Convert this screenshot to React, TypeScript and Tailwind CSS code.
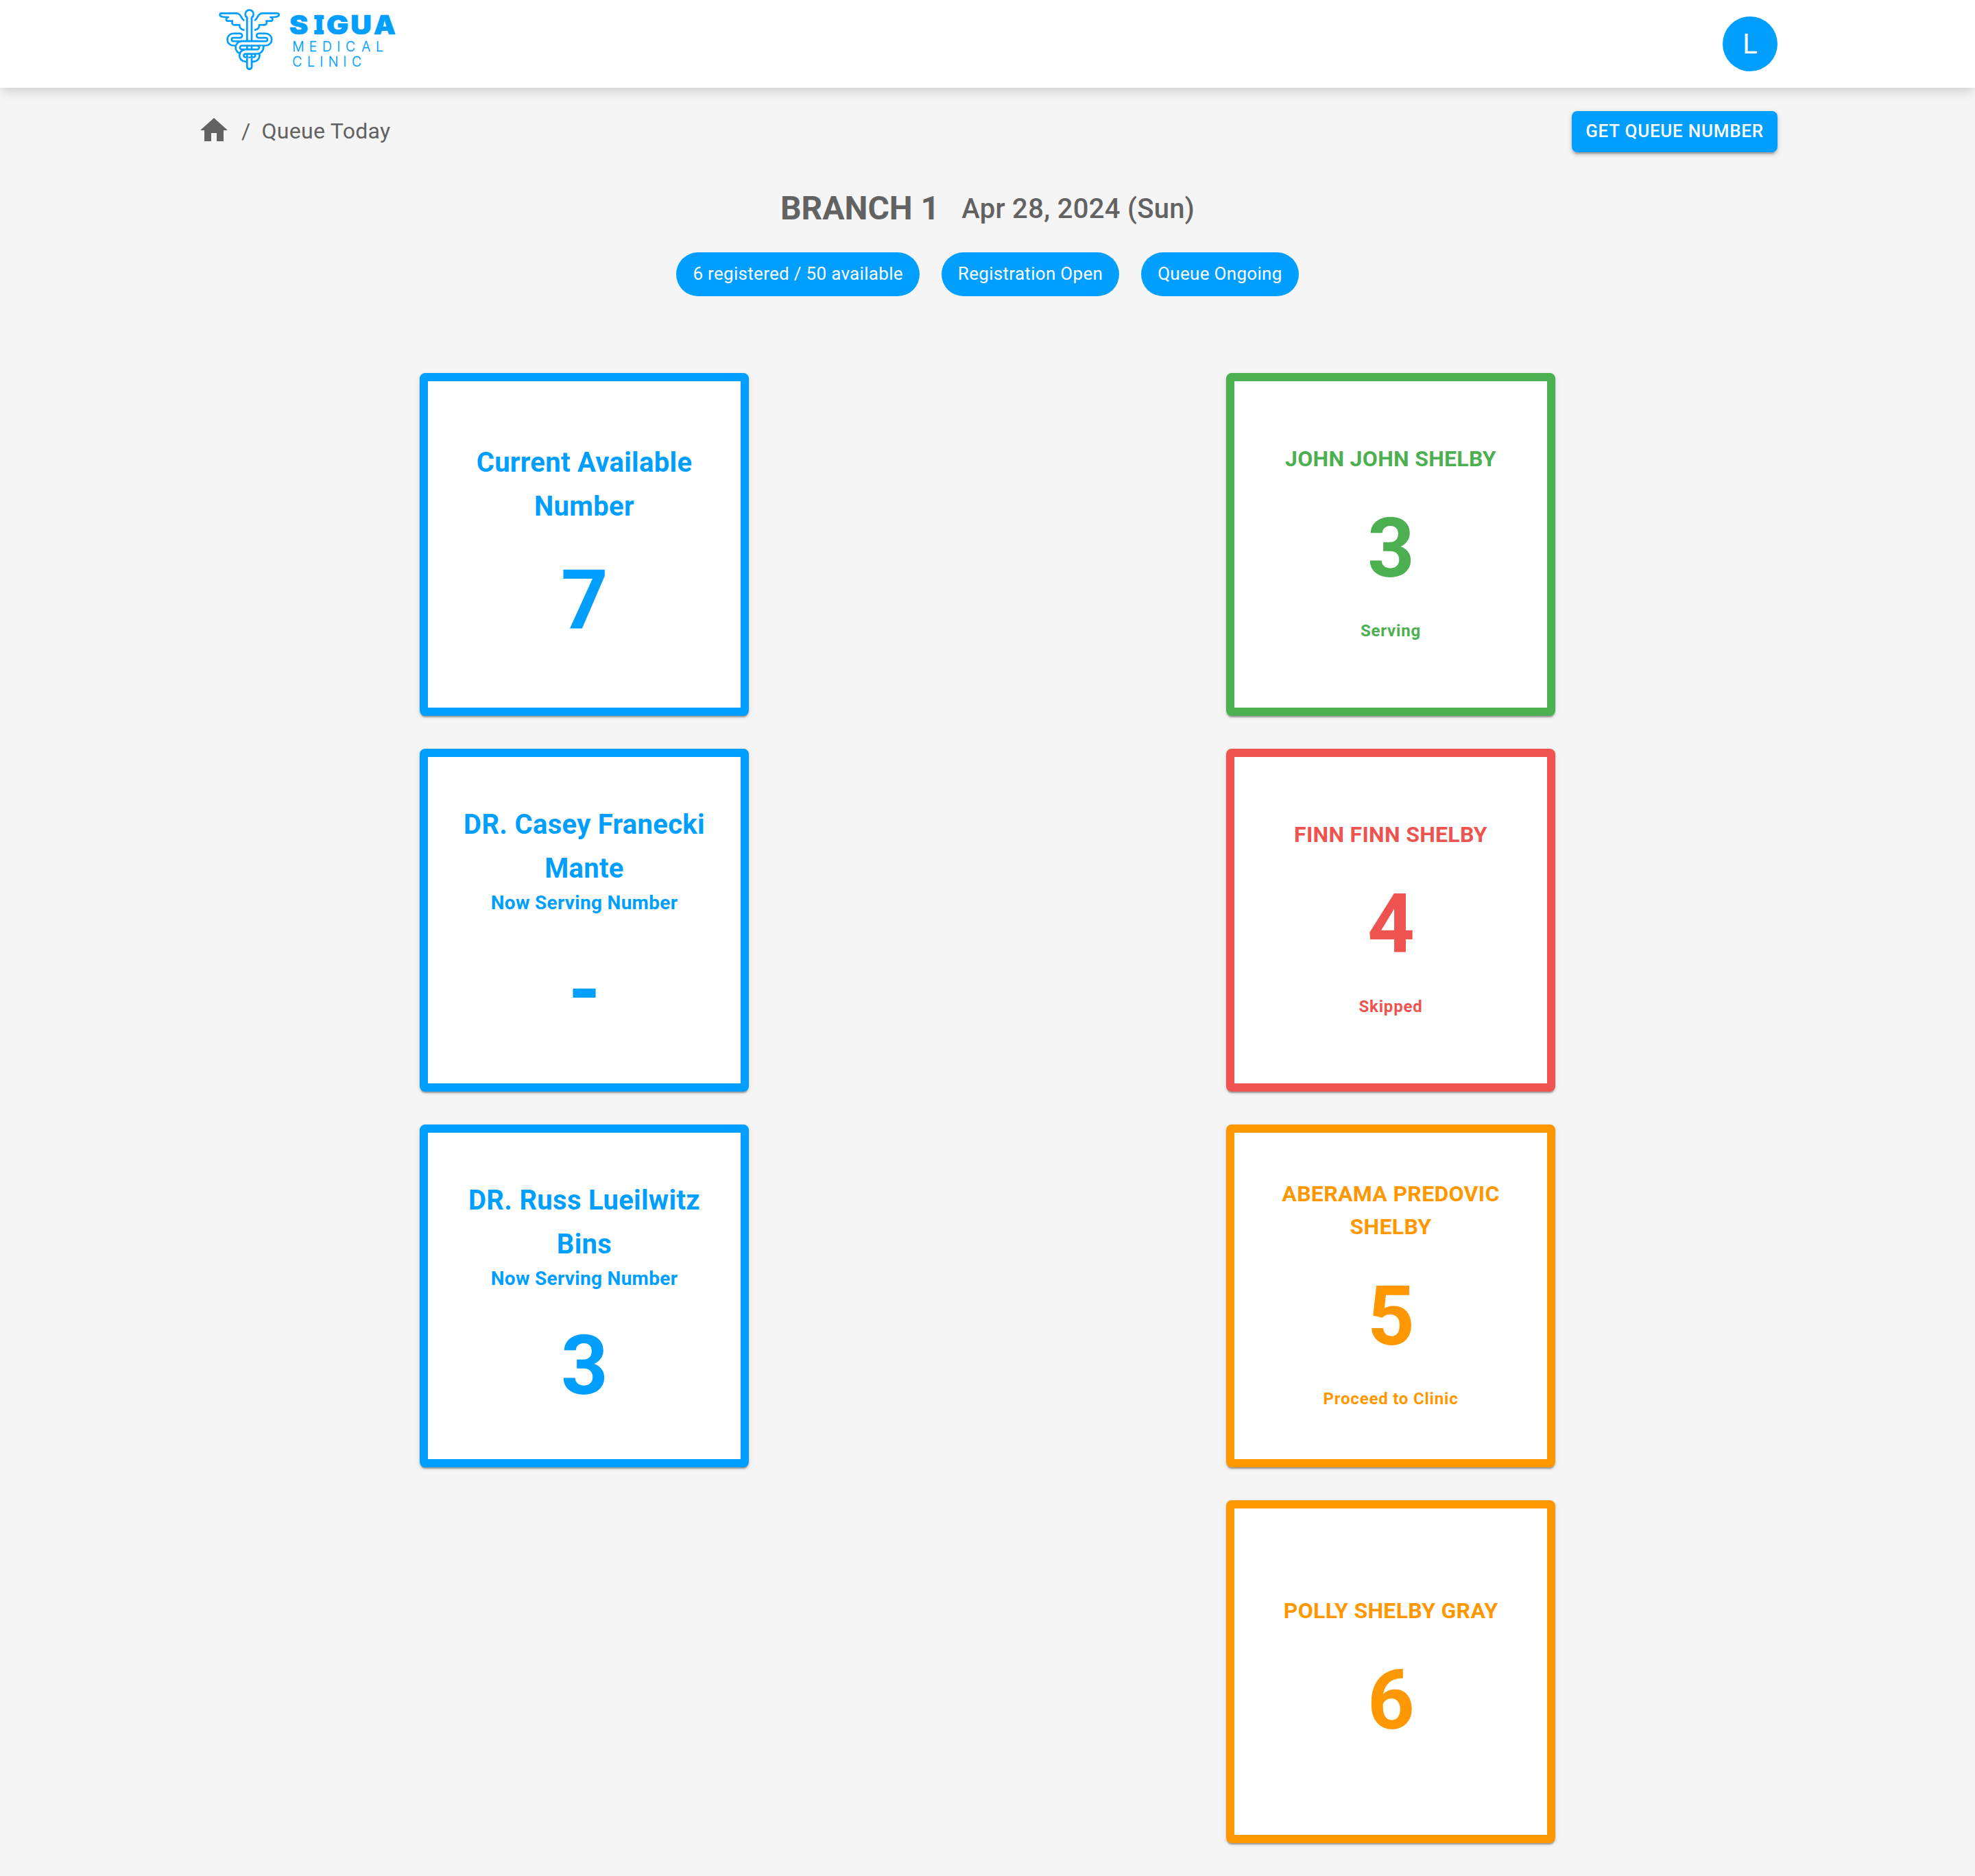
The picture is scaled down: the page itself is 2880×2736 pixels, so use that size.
type Tone = 'blue' | 'green' | 'red' | 'orange';

const tones: Record<Tone, string> = {
  blue: 'border-[#009fff] text-[#009fff]',
  green: 'border-[#4caf50] text-[#4caf50]',
  red: 'border-[#ef5350] text-[#ef5350]',
  orange: 'border-[#ff9800] text-[#ff9800]',
};

// A hollow tube: a thick coloured stroke with a thinner white one over it.
function Tube({ d, cap = 'round' }: { d: string; cap?: 'round' | 'butt' }) {
  return (
    <g fill="none" strokeLinecap={cap}>
      <path d={d} stroke="#009fff" strokeWidth="27" />
      <path d={d} stroke="#ffffff" strokeWidth="11" />
    </g>
  );
}

const wing =
  'M166 88L160 82C152 68 147 58 134 58H70C60 58 59 68 68 72C76 76 84 75 99 75C90 77 86 86 94 92H117C112 102 118 109 126 109H148C147 121 154 128 166 131';

function Logo() {
  return (
    <svg viewBox="0 0 900 330" className="h-[110px] w-[300px]" fill="#009fff">
      <g fill="none" stroke="#009fff" strokeWidth="8" strokeLinecap="round" strokeLinejoin="round">
        <path d={wing} />
        <path d={wing} transform="translate(382 0) scale(-1 1)" />
        <path d="M181 77A18 18 0 1 1 201 77V292A10 10 0 0 1 181 292Z" fill="#fff" />
      </g>
      <Tube d="M150 156H121A17 17 0 0 0 121 190H225A18 18 0 0 1 243 208" />
      <Tube d="M232 156H262A17 17 0 0 1 262 190H158A18 18 0 0 0 158 226H209A17 17 0 0 1 209 260H196" />
      <Tube cap="butt" d="M242 203Q243 205 243 208A18 18 0 0 1 225 226H174A17 17 0 0 0 174 260H186" />
      <path d="M181 254V292A10 10 0 0 0 201 292V254" fill="#fff" stroke="#009fff" strokeWidth="8" />
      <g className="font-['Inter',sans-serif]">
        <g fontSize="115" fontWeight="900" stroke="#009fff" strokeWidth="2">
          <text x="366" y="150" textLength="82" lengthAdjust="spacingAndGlyphs">S</text>
          <text x="480" y="150">I</text>
          <text x="528" y="150" textLength="97" lengthAdjust="spacingAndGlyphs">G</text>
          <text x="634" y="150" textLength="92" lengthAdjust="spacingAndGlyphs">U</text>
          <text x="735" y="150" textLength="96" lengthAdjust="spacingAndGlyphs">A</text>
        </g>
        <path d="M475 66H517V84H475ZM475 132H517V150H475Z" />
        <g stroke="#009fff" strokeWidth="0.8">
          <text x="379 452 510 574 612 682 744" y="226" fontSize="58" fontWeight="300">MEDICAL</text>
          <text x="379 444 499 536 601 639" y="291" fontSize="58" fontWeight="300">CLINIC</text>
        </g>
      </g>
    </svg>
  );
}

function Card({ tone, title, subtitle, number, status }: {
  tone: Tone; title: string; subtitle?: string; number: string; status?: string;
}) {
  const titleClass =
    tone === 'blue'
      ? 'mt-px -mb-px text-[40px] leading-[64px] tracking-[0.0075em]'
      : '-mt-px mb-px text-[32px] leading-[48px] tracking-[0.00938em]';
  return (
    <section
      className={`flex h-[500px] w-[480px] flex-col items-center justify-center rounded-lg border-12 bg-white px-9 text-center font-bold shadow-[0_4px_2px_-2px_rgba(0,0,0,0.2),0_2px_2px_0_rgba(0,0,0,0.14),0_2px_6px_0_rgba(0,0,0,0.12)] ${tones[tone]}`}
    >
      <h2 className={titleClass}>{title}</h2>
      {subtitle && <p className="-mt-px mb-px text-[28px] leading-10 tracking-[0.01071em]">{subtitle}</p>}
      <p className={`mt-[34px] text-[120px] leading-[144px] tracking-[-0.00833em] ${status ? 'mb-[30px]' : '-mb-0.5'}`}>
        {number}
      </p>
      {status && <p className="-mt-0.5 mb-0.5 text-2xl leading-10 tracking-[0.03333em]">{status}</p>}
    </section>
  );
}

function Chip({ children }: { children: string }) {
  return (
    <span className="flex h-16 items-center rounded-full bg-[#009fff] px-6 pb-0.5 text-[26px] tracking-[0.3px] text-white">
      {children}
    </span>
  );
}

export default function App() {
  return (
    <div className="min-h-[2736px] bg-[#f5f5f5] font-['Roboto',sans-serif] text-[#626262]">
      <header className="relative h-32 bg-white shadow-[0_8px_16px_-4px_rgba(0,0,0,0.12),0_2px_20px_0_rgba(0,0,0,0.08)]">
        <div className="mx-auto flex h-full w-[2304px] items-center justify-between">
          <div className="ml-3 self-start"><Logo /></div>
          <div className="flex size-20 items-center justify-center rounded-full bg-[#009fff] pt-0.5 text-[40px] text-white">L</div>
        </div>
      </header>

      <main className="mx-auto w-[2304px] pt-[34px]">
        <div className="flex h-[60px] items-center justify-between">
          <nav className="-mt-1 flex items-center gap-4 text-[32px] leading-12 tracking-[0.00938em]">
            <svg viewBox="0 0 24 24" className="size-12" fill="currentColor">
              <path d="M10 20v-6h4v6h5v-8h3L12 3 2 12h3v8z" />
            </svg>
            <span className="mt-0.5">/</span>
            <span className="mt-0.5">Queue Today</span>
          </nav>
          <button className="h-[60px] w-[300px] rounded-lg bg-[#009fff] pb-0.5 text-[26px] font-medium tracking-[0.02857em] whitespace-nowrap text-white shadow-[0_6px_2px_-4px_rgba(0,0,0,0.2),0_4px_4px_0_rgba(0,0,0,0.14),0_2px_10px_0_rgba(0,0,0,0.12)]">
            GET QUEUE NUMBER
          </button>
        </div>

        <div className="mt-[50px] flex h-16 items-center justify-center gap-8">
          <h1 className="text-[48px] leading-16 font-bold">BRANCH 1</h1>
          <p className="mt-0.5 text-[40px] leading-16 font-medium tracking-[0.0075em]">Apr 28, 2024 (Sun)</p>
        </div>
        <div className="mt-8 flex justify-center gap-8">
          <Chip>6 registered / 50 available</Chip>
          <Chip>Registration Open</Chip>
          <Chip>Queue Ongoing</Chip>
        </div>

        <div className="mt-28 grid grid-cols-2 gap-12">
          <div className="flex flex-col items-center gap-12">
            <Card tone="blue" title="Current Available Number" number="7" />
            <Card tone="blue" title="DR. Casey Franecki Mante" subtitle="Now Serving Number" number="-" />
            <Card tone="blue" title="DR. Russ Lueilwitz Bins" subtitle="Now Serving Number" number="3" />
          </div>
          <div className="flex flex-col items-center gap-12">
            <Card tone="green" title="JOHN JOHN SHELBY" number="3" status="Serving" />
            <Card tone="red" title="FINN FINN SHELBY" number="4" status="Skipped" />
            <Card tone="orange" title="ABERAMA PREDOVIC SHELBY" number="5" status="Proceed to Clinic" />
            <Card tone="orange" title="POLLY SHELBY GRAY" number="6" />
          </div>
        </div>
      </main>
    </div>
  );
}
